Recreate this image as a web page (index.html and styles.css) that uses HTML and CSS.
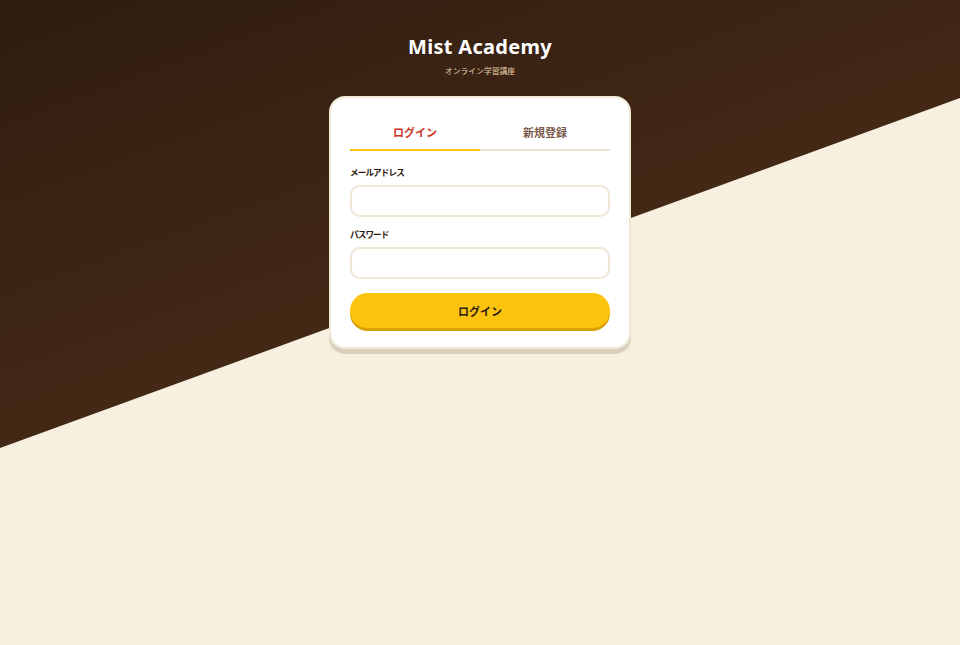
FILE: index.html
```html
<!DOCTYPE html>
<html lang="ja">
<head>
<meta charset="utf-8">
<title>Mist Academy</title>
<link rel="stylesheet" href="styles.css">
</head>
<body>
<div class="page">
  <div class="bg-dark"></div>
  <main class="content">
    <header class="brand">
      <h1 class="brand-title">Mist Academy</h1>
      <p class="brand-sub">オンライン学習講座</p>
    </header>
    <section class="card">
      <nav class="tabs">
        <div class="tab tab-active">ログイン</div>
        <div class="tab">新規登録</div>
      </nav>
      <form class="form">
        <label class="label">メールアドレス</label>
        <input class="input" type="email">
        <label class="label label-gap">パスワード</label>
        <input class="input" type="password">
        <button class="btn" type="button">ログイン</button>
      </form>
    </section>
  </main>
</div>
</body>
</html>
```
FILE: styles.css
```css
* { box-sizing: border-box; }
html, body { margin: 0; padding: 0; }
body {
  font-family: "Noto Sans CJK JP", "Noto Sans", sans-serif;
  background: #f7f0e1;
  width: 960px;
  height: 645px;
  overflow: hidden;
}
.page {
  position: relative;
  width: 960px;
  height: 645px;
}
.bg-dark {
  position: absolute;
  inset: 0;
  background: linear-gradient(160deg, #2f1d10 0%, #4a2c17 60%, #56341a 100%);
  clip-path: polygon(0 0, 100% 0, 100% 98px, 0 448px);
}
.content {
  position: relative;
  display: flex;
  flex-direction: column;
  align-items: center;
}
.brand {
  text-align: center;
  padding-top: 33px;
}
.brand-title {
  margin: 0;
  font-family: "Noto Sans", sans-serif;
  font-weight: 700;
  font-size: 20px;
  line-height: 28px;
  letter-spacing: 0.3px;
  color: #ffffff;
}
.brand-sub {
  margin: 3px 0 0;
  font-size: 7.8px;
  line-height: 14px;
  color: #e6cfae;
}
.card {
  margin-top: 18px;
  width: 302px;
  background: #ffffff;
  border: 2px solid #f1e9d8;
  border-radius: 16px;
  box-shadow: 0 5px 0 #d9cfbb;
  padding: 20px 19px 19px;
}
.tabs {
  display: flex;
}
.tab {
  flex: 1;
  text-align: center;
  font-size: 11px;
  font-weight: 700;
  line-height: 20px;
  padding: 4px 0 7px;
  color: #7a5a48;
  border-bottom: 2px solid #ebe3d3;
}
.tab-active {
  color: #c9351f;
  border-bottom-color: #f6c21c;
}
.form {
  display: flex;
  flex-direction: column;
  margin: 0;
}
.label {
  margin-top: 14px;
  font-size: 8.6px;
  font-weight: 700;
  line-height: 14px;
  letter-spacing: -0.9px;
  color: #2b1a10;
}
.label-gap { margin-top: 10px; }
.input {
  margin-top: 6px;
  height: 32px;
  border: 2px solid #efe7d5;
  border-radius: 10px;
  background: #fff;
  font: inherit;
  outline: none;
}
.btn {
  margin-top: 14px;
  height: 35px;
  border: none;
  border-radius: 18px;
  background: #fdc40f;
  box-shadow: 0 3px 0 #d9a204;
  font-family: "Noto Sans CJK JP", sans-serif;
  font-size: 11px;
  font-weight: 700;
  color: #2b1a10;
  padding: 0;
}
```
